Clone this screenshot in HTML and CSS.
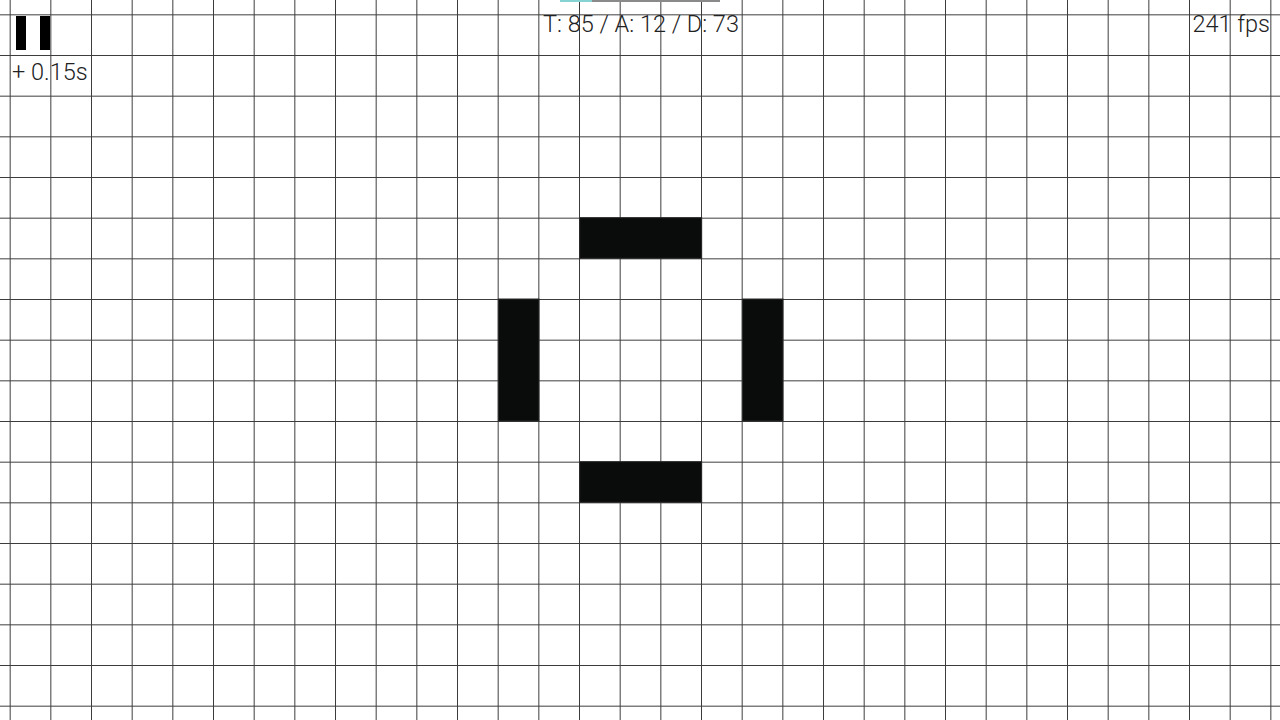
FILE: index.html
```html
<!DOCTYPE html>
<html>
<head>
<meta charset="utf-8">
<link rel="stylesheet" href="styles.css">
</head>
<body>
<div class="stage">
  <svg class="board" width="1280" height="720" viewBox="0 0 1280 720">
    <defs>
      <pattern id="grid" x="9.667" y="14.333" width="40.667" height="40.667" patternUnits="userSpaceOnUse">
        <path d="M0.5 0 V40.667 M0 0.5 H40.667" class="gridline"/>
      </pattern>
    </defs>
    <rect x="0" y="0" width="1280" height="720" class="bg"/>
    <rect x="0" y="0" width="1280" height="720" fill="url(#grid)"/>
    <g class="alive">
      <rect x="579.667" y="217.667" width="122" height="40.667"/>
      <rect x="498.333" y="299" width="40.667" height="122"/>
      <rect x="742.333" y="299" width="40.667" height="122"/>
      <rect x="579.667" y="461.667" width="122" height="40.667"/>
    </g>
  </svg>
  <div class="progress"><div class="progress-fill"></div></div>
  <div class="hud">
    <div class="hud-left">
      <div class="pause"><span class="pbar"></span><span class="pbar"></span></div>
      <div class="delay">+ 0.15s</div>
    </div>
    <div class="stats">T: 85 / A: 12 / D: 73</div>
    <div class="fps">241 fps</div>
  </div>
</div>
</body>
</html>
```
FILE: styles.css
```css
html, body {
  margin: 0;
  padding: 0;
  background: #fff;
}
.stage {
  position: relative;
  width: 1280px;
  height: 720px;
  overflow: hidden;
  font-family: Roboto, "Liberation Sans", sans-serif;
  font-weight: 300;
  color: #222;
}
.board {
  display: block;
}
.bg {
  fill: #ffffff;
}
.gridline {
  stroke: #3c3c3c;
  stroke-width: 1;
  fill: none;
}
.alive rect {
  fill: #0a0c0c;
  stroke: #2a2a2a;
  stroke-width: 1;
}
.progress {
  position: absolute;
  top: 0;
  left: 560px;
  width: 160px;
  height: 2px;
  background: #8a8a8a;
}
.progress-fill {
  width: 20%;
  height: 100%;
  background: #86d3d3;
}
.hud {
  position: absolute;
  top: 0;
  left: 0;
  right: 0;
  display: flex;
  justify-content: space-between;
  align-items: flex-start;
  padding: 0 10px 0 12px;
  font-size: 23.5px;
  line-height: 28px;
}
.hud-left {
  display: flex;
  flex-direction: column;
  width: 200px;
}
.pause {
  display: flex;
  gap: 14px;
  margin: 16px 0 0 4px;
  height: 34px;
}
.pbar {
  width: 10px;
  height: 34px;
  background: #000;
}
.delay {
  margin-top: 8px;
}
.stats {
  margin-top: 10px;
}
.fps {
  width: 200px;
  text-align: right;
  margin-top: 10px;
}
```
